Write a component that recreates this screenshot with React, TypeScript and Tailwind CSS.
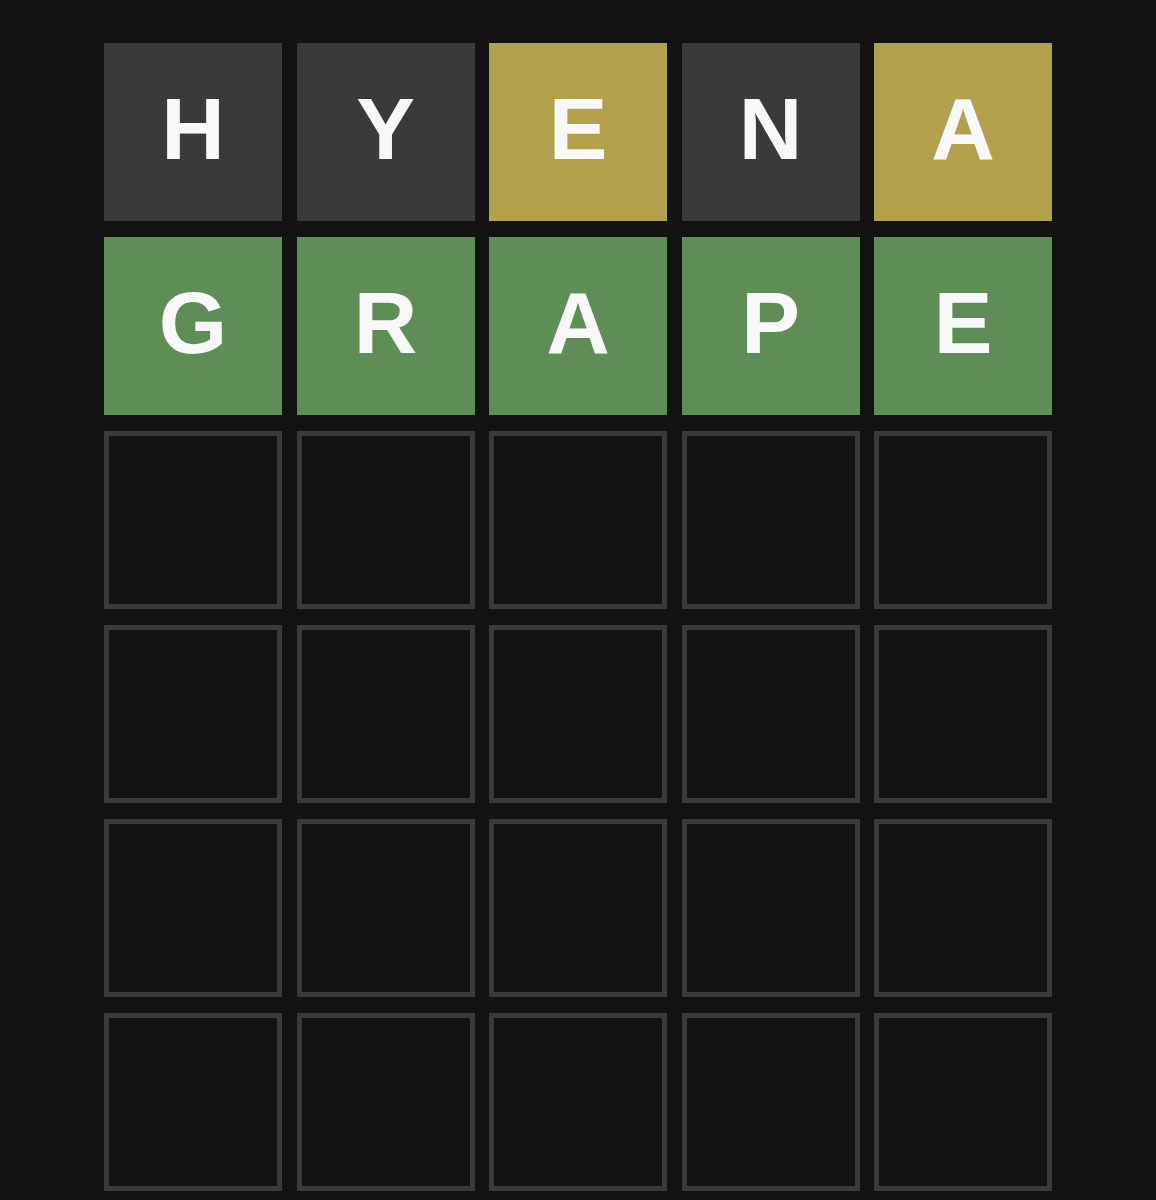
type TileState = 'absent' | 'present' | 'correct' | 'empty';

interface Tile {
  letter: string;
  state: TileState;
}

const guesses: Tile[][] = [
  [
    { letter: 'H', state: 'absent' },
    { letter: 'Y', state: 'absent' },
    { letter: 'E', state: 'present' },
    { letter: 'N', state: 'absent' },
    { letter: 'A', state: 'present' },
  ],
  [
    { letter: 'G', state: 'correct' },
    { letter: 'R', state: 'correct' },
    { letter: 'A', state: 'correct' },
    { letter: 'P', state: 'correct' },
    { letter: 'E', state: 'correct' },
  ],
];

const ROWS = 6;
const COLS = 5;

const stateClass: Record<TileState, string> = {
  absent: 'bg-[#3a3a3c]',
  present: 'bg-[#b1a14c]',
  correct: 'bg-[#5f8d56]',
  empty: 'border-[5px] border-[#3a3a3c]',
};

function BoardTile({ tile }: { tile: Tile }) {
  return (
    <div
      className={`flex h-[178px] w-[178px] items-center justify-center pb-[6px] text-[88px] font-bold leading-none text-[#f8f8f8] ${stateClass[tile.state]}`}
      style={{ fontFamily: '"Liberation Sans", Arial, sans-serif' }}
    >
      {tile.letter}
    </div>
  );
}

export default function App() {
  // fill remaining rows with empty tiles
  const rows: Tile[][] = Array.from({ length: ROWS }, (_, r) =>
    guesses[r] ?? Array.from({ length: COLS }, () => ({ letter: '', state: 'empty' as TileState }))
  );

  return (
    <div className="min-h-[1200px] w-full bg-[#121213] pt-[43px]">
      <div className="mx-auto grid w-[948px] grid-cols-5 gap-x-[14.5px] gap-y-[16px]">
        {rows.map((row, r) =>
          row.map((tile, c) => <BoardTile key={`${r}-${c}`} tile={tile} />)
        )}
      </div>
    </div>
  );
}
